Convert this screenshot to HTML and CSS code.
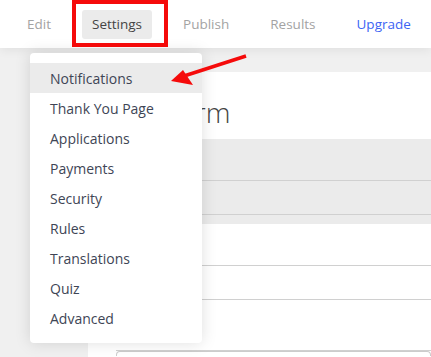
FILE: index.html
```html
<!DOCTYPE html>
<html lang="en">
<head>
  <meta charset="UTF-8">
  <title>Form Settings</title>
  <link rel="stylesheet" href="styles.css">
</head>
<body>

<nav class="topnav">
  <a class="tab">Edit</a>
  <a class="tab active">Settings</a>
  <a class="tab">Publish</a>
  <a class="tab">Results</a>
  <a class="tab upgrade">Upgrade</a>
</nav>

<main class="page">
  <section class="panel">
    <h1 class="title">My Form</h1>
    <div class="band">
      <div class="row tall"></div>
      <div class="row"></div>
    </div>
    <div class="rows">
      <div class="row tall"></div>
      <div class="row"></div>
      <div class="row tallest"></div>
      <div class="field"></div>
    </div>
  </section>
</main>

<ul class="menu">
  <li class="selected">Notifications</li>
  <li>Thank You Page</li>
  <li>Applications</li>
  <li>Payments</li>
  <li>Security</li>
  <li>Rules</li>
  <li>Translations</li>
  <li>Quiz</li>
  <li>Advanced</li>
</ul>

<!-- annotation -->
<div class="highlight"></div>
<svg class="arrow" width="431" height="357" viewBox="0 0 431 357">
  <line x1="246" y1="56" x2="184" y2="76" stroke="#f50a0a" stroke-width="3.5"/>
  <polygon points="171,81 183,70 193,85" fill="#f50a0a"/>
</svg>

</body>
</html>
```

FILE: styles.css
```css
body {
  margin: 0;
  font-family: "Open Sans", "Liberation Sans", sans-serif;
  background-color: #f0f0f0;
  overflow: hidden;
  height: 357px;
}

.topnav {
  display: flex;
  align-items: center;
  gap: 21px;
  height: 48px;
  padding-left: 17px;
  background-color: #fff;
  box-shadow: 0 2px 10px rgba(0, 0, 0, 0.07);
  position: relative;
  z-index: 1;
}

.tab {
  font-size: 13.5px;
  line-height: 29px;
  padding: 0 10px;
  color: #a3a3a3;
  border-radius: 3px;
}

.tab.active {
  background-color: #ebebeb;
  color: #444;
}

.tab.upgrade {
  color: #3c64f4;
}

.page {
  padding: 24px 0 0 88px;
}

.panel {
  background-color: #fff;
  height: 285px;
}

.title {
  margin: 0;
  height: 67px;
  padding-left: 32px;
  font-size: 28px;
  font-weight: 300;
  line-height: 80px;
  color: #444;
}

.band {
  background-color: #ebebeb;
  height: 85px;
}

.row {
  margin-left: 28px;
  height: 33px;
  border-bottom: 1px solid #d0d0d0;
}

.row.tall {
  height: 41px;
}

.row.tallest {
  height: 50px;
}

.field {
  margin-left: 28px;
  height: 4px;
  border: 1px solid #ccc;
  border-bottom: none;
  border-radius: 4px 4px 0 0;
}

.menu {
  position: absolute;
  left: 30px;
  top: 53px;
  width: 172px;
  margin: 0;
  padding: 10px 0;
  list-style: none;
  background-color: #fff;
  border-radius: 4px;
  box-shadow: 0 0 16px rgba(0, 0, 0, 0.13);
  z-index: 2;
}

.menu li {
  height: 30px;
  line-height: 31px;
  padding-left: 20px;
  font-size: 14px;
  color: #3e4555;
}

.menu li.selected {
  background-color: #ebebeb;
}

.highlight {
  position: absolute;
  left: 72px;
  top: 0;
  width: 88px;
  height: 39px;
  border: 4px solid #f50a0a;
  z-index: 3;
}

.arrow {
  position: absolute;
  left: 0;
  top: 0;
  z-index: 3;
}
```
